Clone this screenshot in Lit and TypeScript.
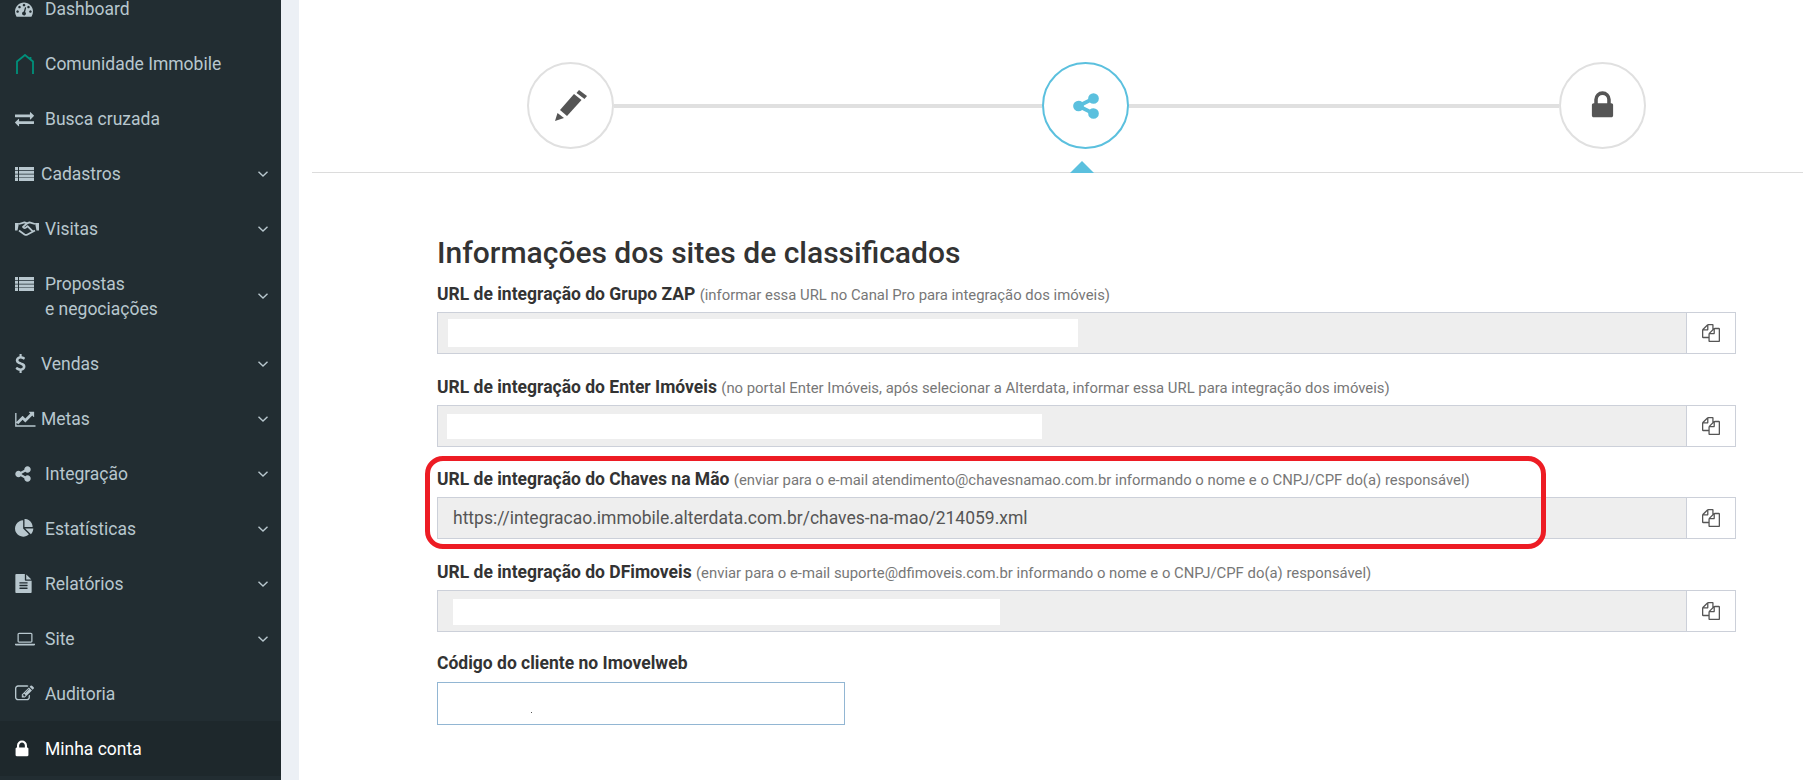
import { LitElement, html, css, svg } from "lit";
import { customElement } from "lit/decorators.js";

const P: Record<string, [string, string]> = {
  lock: ["0 0 1792 1792", "M640 768h512v-192q0-106-75-181t-181-75-181 75-75 181v192zm832 96v576q0 40-28 68t-68 28h-960q-40 0-68-28t-28-68v-576q0-40 28-68t68-28h32v-192q0-184 132-316t316-132 316 132 132 316v192h32q40 0 68 28t28 68z"],
  share: ["0 0 1792 1792", "M1344 1024q133 0 226.5 93.5t93.5 226.5-93.5 226.5-226.5 93.5-226.5-93.5-93.5-226.5q0-12 2-34l-360-180q-92 86-218 86-133 0-226.5-93.5t-93.5-226.5 93.5-226.5 226.5-93.5q126 0 218 86l360-180q-2-22-2-34 0-133 93.5-226.5t226.5-93.5 226.5 93.5 93.5 226.5-93.5 226.5-226.5 93.5q-126 0-218-86l-360 180q2 22 2 34t-2 34l360 180q92-86 218-86z"],
  files: ["0 0 1792 1792", "M1696 384q40 0 68 28t28 68v1216q0 40-28 68t-68 28h-960q-40 0-68-28t-28-68v-288h-544q-40 0-68-28t-28-68v-672q0-40 20-88t48-76l408-408q28-28 76-48t88-20h416q40 0 68 28t28 68v328q68-40 128-40h416zm-544 213l-299 299h299v-299zm-640-384l-299 299h299v-299zm196 647l316-316v-416h-384v416q0 40-28 68t-68 28h-416v640h512v-256q0-40 20-88t48-76zm956 804v-1152h-384v416q0 40-28 68t-68 28h-416v640h896z"],
  exchange: ["0 0 1792 1792", "M1792 1184v192q0 13-9.5 22.5t-22.5 9.5h-1376v192q0 13-9.5 22.5t-22.5 9.5q-12 0-24-10l-319-320q-9-9-9-22 0-14 9-23l320-320q9-9 23-9 13 0 22.5 9.5t9.5 22.5v192h1376q13 0 22.5 9.5t9.5 22.5zm0-544q0 14-9 23l-320 320q-9 9-23 9-13 0-22.5-9.5t-9.5-22.5v-192h-1376q-13 0-22.5-9.5t-9.5-22.5v-192q0-13 9.5-22.5t22.5-9.5h1376v-192q0-14 9-23t23-9q12 0 24 10l319 319q9 9 9 23z"],
  dash: ["0 0 1792 1792", "M384 1152q0-53-37.5-90.5t-90.5-37.5-90.5 37.5-37.5 90.5 37.5 90.5 90.5 37.5 90.5-37.5 37.5-90.5zm192-448q0-53-37.5-90.5t-90.5-37.5-90.5 37.5-37.5 90.5 37.5 90.5 90.5 37.5 90.5-37.5 37.5-90.5zm428 481l101-382q6-26-7.5-48.5t-38.5-29.5-48 6.5-30 39.5l-101 382q-60 5-107 43.5t-63 98.5q-20 77 20 146t117 89 146-20 89-117q16-60-6-117t-72-91zm660-33q0-53-37.5-90.5t-90.5-37.5-90.5 37.5-37.5 90.5 37.5 90.5 90.5 37.5 90.5-37.5 37.5-90.5zm-640-640q0-53-37.5-90.5t-90.5-37.5-90.5 37.5-37.5 90.5 37.5 90.5 90.5 37.5 90.5-37.5 37.5-90.5zm448 192q0-53-37.5-90.5t-90.5-37.5-90.5 37.5-37.5 90.5 37.5 90.5 90.5 37.5 90.5-37.5 37.5-90.5zm320 448q0 261-141 483-19 29-54 29h-1402q-35 0-54-29-141-221-141-483 0-182 71-348t191-286 286-191 348-71 348 71 286 191 191 286 71 348z"],
  pie: ["0 0 1792 1792", "M768 890l546 546q-106 108-247.5 168t-298.5 60q-209 0-385.5-103t-279.5-279.5-103-385.5 103-385.5 279.5-279.5 385.5-103v762zm187 2h773q0 157-60 298.5t-168 247.5zm709-128h-768v-768q209 0 385.5 103t279.5 279.5 103 385.5z"],
  file: ["0 0 1792 1792", "M1596 476q14 14 28 36h-472v-472q22 14 36 28zm-476 164h544v1056q0 40-28 68t-68 28h-1344q-40 0-68-28t-28-68v-1600q0-40 28-68t68-28h800v544q0 40 28 68t68 28zm160 736v-64q0-14-9-23t-23-9h-704q-14 0-23 9t-9 23v64q0 14 9 23t23 9h704q14 0 23-9t9-23zm0-256v-64q0-14-9-23t-23-9h-704q-14 0-23 9t-9 23v64q0 14 9 23t23 9h704q14 0 23-9t9-23zm0-256v-64q0-14-9-23t-23-9h-704q-14 0-23 9t-9 23v64q0 14 9 23t23 9h704q14 0 23-9t9-23z"],
  edit: ["0 0 1792 1792", "M888 1184l116-116-152-152-116 116v56h96v96h56zm440-720q-16-16-33 1l-350 350q-17 17-1 33t33-1l350-350q17-17 1-33zm80 594v190q0 119-84.5 203.5t-203.5 84.5h-832q-119 0-203.5-84.5t-84.5-203.5v-832q0-119 84.5-203.5t203.5-84.5h832q63 0 117 25 15 7 18 23 3 17-9 29l-49 49q-14 14-32 8-23-6-45-6h-832q-66 0-113 47t-47 113v832q0 66 47 113t113 47h832q66 0 113-47t47-113v-126q0-13 9-22l64-64q15-15 35-7t20 29zm-96-738l288 288-672 672h-288v-288zm444 132l-92 92-288-288 92-92q28-28 68-28t68 28l152 152q28 28 28 68t-28 68z"],
  chart: ["0 0 2048 1792", "M1920 1536v128h-1920v-1280h128v1152h1792zm-128-1248v435q0 21-19.5 29.5t-35.5-7.5l-121-121-633 633q-10 10-23 10t-23-10l-233-233-416 416-192-192 585-585q10-10 23-10t23 10l233 233 464-464-121-121q-16-16-7.5-35.5t29.5-19.5h435q14 0 23 9t9 23z"],
  usd: ["0 0 1792 1792", "M1362 1185q0 153-99.5 263.5t-258.5 136.5v175q0 14-9 23t-23 9h-135q-13 0-22.5-9.5t-9.5-22.5v-175q-66-9-127.5-31t-101.5-44.5-74-48-46.5-37.5-17.5-18q-17-21-2-41l103-135q7-10 23-12 15-2 24 9l2 2q113 99 243 125 37 8 74 8 81 0 142.5-43t61.5-122q0-28-15-53t-33.5-42-58.5-37.5-66-32-80-32.5q-39-16-61.5-25t-61.5-26.5-62.5-31-56.5-35.5-53.5-42.5-43.5-49-35.5-58-21-66.5-8.5-78q0-138 98-242t255-134v-180q0-13 9.5-22.5t22.5-9.5h135q14 0 23 9t9 23v176q57 6 110.5 23t87 33.5 63.5 37.5 39 29 15 14q17 18 5 38l-81 146q-8 15-23 16-14 3-27-7-3-3-14.5-12t-39-26.5-58.5-32-74.5-26-85.5-11.5q-95 0-155 43t-60 111q0 26 8.5 48t29.5 41.5 39.5 33 56 31 60.5 27 70 27.5q53 20 81 31.5t76 35 75.5 42.5 62 50 53 63.5 31.5 76.5 13 94z"],
  laptop: ["0 0 2048 1792", "M416 1280q-66 0-113-47t-47-113v-704q0-66 47-113t113-47h1216q66 0 113 47t47 113v704q0 66-47 113t-113 47h-1216zm-32-864v704q0 13 9.5 22.5t22.5 9.5h1216q13 0 22.5-9.5t9.5-22.5v-704q0-13-9.5-22.5t-22.5-9.5h-1216q-13 0-22.5 9.5t-9.5 22.5zm1504 960h160v96q0 40-47 68t-113 28h-1728q-66 0-113-28t-47-68v-96h1888z"],
  list: ["0 0 19 14", "M0 0h3v3H0zM4 0h15v3H4zM0 3.700h3v3H0zM4 3.700h15v3H4zM0 7.400h3v3H0zM4 7.400h15v3H4zM0 11h3v3H0zM4 11h15v3H4z"],
};

function icon(name: string, w: number, h: number, cls = "") {
  const [vb, d] = P[name];
  return html`<svg class=${cls} width=${w} height=${h} viewBox=${vb} fill="currentColor" aria-hidden="true"><path d=${d}></path></svg>`;
}

const handshake = html`<svg width="24" height="15" viewBox="0 0 24 14" fill="none" stroke="currentColor" stroke-width="1.800" stroke-linejoin="round" aria-hidden="true">
  <path d="M4 2.500L9.500.800l2.500 1 2.500-1L20 2.500"></path>
  <path d="M4 9l5.500 4c1 .6 2 .6 3 0L20 9"></path>
  <path d="M12 1.800L8 5.500c1 1.500 2.500 1.200 3.500.2l1-1 5.500 5.500"></path>
  <path d="M20 1.500h4V9h-2.500zM0 1.500h4L2.500 9H0z" fill="currentColor" stroke="none"></path>
</svg>`;

const house = html`<svg width="20" height="20" viewBox="0 0 20 20" fill="none" stroke="#00907b" stroke-width="1.800" aria-hidden="true">
  <path d="M2 20V7.500L10 1l5.500 4.500V3m0 2.500L18 7.500V20"></path>
</svg>`;

const pencil = svg`<svg width="32" height="31" viewBox="0 0 32 31" fill="#555" aria-hidden="true">
  <path d="M0 31l2.500-8 6.500 5z"></path>
  <path d="M5 20L19 4l7.500 6L12 26z"></path>
  <path d="M24 0l8 6-2.500 3-8-6z"></path>
</svg>`;

interface Item { label: string[]; icon: unknown; narrow?: boolean; sub?: boolean; active?: boolean; top?: boolean; shift?: string; }

const items: Item[] = [
  { label: ["Dashboard"], icon: icon("dash", 18, 18) },
  { label: ["Comunidade Immobile"], icon: house },
  { label: ["Busca cruzada"], icon: icon("exchange", 19, 19) },
  { label: ["Cadastros"], icon: icon("list", 19, 14), narrow: true, sub: true },
  { label: ["Visitas"], icon: handshake, sub: true },
  { label: ["Propostas", "e negociações"], icon: icon("list", 19, 14), sub: true, top: true },
  { label: ["Vendas"], icon: icon("usd", 19, 19), narrow: true, sub: true, shift: "shift-usd" },
  { label: ["Metas"], icon: icon("chart", 22, 19), narrow: true, sub: true },
  { label: ["Integração"], icon: icon("share", 18, 18), sub: true, shift: "shift-share" },
  { label: ["Estatísticas"], icon: icon("pie", 19, 19), sub: true },
  { label: ["Relatórios"], icon: icon("file", 19, 19), sub: true, shift: "shift-file" },
  { label: ["Site"], icon: icon("laptop", 20, 18), sub: true },
  { label: ["Auditoria"], icon: icon("edit", 19, 19) },
  { label: ["Minha conta"], icon: icon("lock", 20, 20), active: true, shift: "shift-lock" },
];

interface Mask { left: number; width: number; height: number; dy: number; }
interface Field { label: string; hint: string; value?: string; mask?: Mask; }

const fields: Field[] = [
  { label: "URL de integração do Grupo ZAP", hint: "(informar essa URL no Canal Pro para integração dos imóveis)", mask: { left: 10, width: 630, height: 28, dy: -1 } },
  { label: "URL de integração do Enter Imóveis", hint: "(no portal Enter Imóveis, após selecionar a Alterdata, informar essa URL para integração dos imóveis)", mask: { left: 9, width: 595, height: 25, dy: 2 } },
  { label: "URL de integração do Chaves na Mão", hint: "(enviar para o e-mail atendimento@chavesnamao.com.br informando o nome e o CNPJ/CPF do(a) responsável)", value: "https://integracao.immobile.alterdata.com.br/chaves-na-mao/214059.xml" },
  { label: "URL de integração do DFimoveis", hint: "(enviar para o e-mail suporte@dfimoveis.com.br informando o nome e o CNPJ/CPF do(a) responsável)", mask: { left: 15, width: 547, height: 26, dy: 2 } },
];

@customElement("app-root")
export class AppRoot extends LitElement {
  static styles = css`
    :host { display: flex; width: 1803px; height: 780px; overflow: hidden; background: #fff; font-family: Roboto, "Liberation Sans", sans-serif; position: relative; }
    .side { width: 281px; flex: none; background: #222d32; color: #b8c7ce; font-size: 17.5px; }
    .menu { margin-top: -19px; display: flex; flex-direction: column; }
    .row { height: 55px; display: flex; align-items: center; padding: 0 13px 0 15px; box-sizing: border-box; }
    .row.two { height: 80px; }
    .row.active { background: #1e282c; color: #fff; }
    .ic { width: 30px; flex: none; display: flex; align-items: center; }
    .ic.narrow { width: 26px; }
    .ic.top { margin-top: -25px; }
    .shift-usd svg { margin-left: -4px; }
    .shift-share svg { margin-left: -1px; }
    .shift-file svg { margin-left: -1px; }
    .shift-lock svg { margin-left: -3px; }
    .lbl { flex: 1; line-height: 25px; padding-top: 2px; }
    .lbl span { display: block; }
    .chev { flex: none; }
    .gutter { width: 18px; flex: none; background: #ecf0f5; }
    .main { flex: 1; min-width: 0; padding: 0 67px 0 13px; }
    .steps { height: 173px; margin-right: -67px; box-sizing: border-box; border-bottom: 1px solid #dcdcdc; position: relative; display: flex; padding: 62px 0 0 215px; }
    .circle { width: 87px; height: 87px; box-sizing: border-box; border-radius: 50%; border: 2px solid #e0e0e0; background: #fff; display: flex; align-items: center; justify-content: center; flex: none; color: #555; }
    .circle.on { border-color: #5bc0de; color: #5bc0de; }
    .line { height: 4px; background: #e0e0e0; flex: none; margin-top: 41.500px; }
    .l1 { width: 428px; }
    .l2 { width: 430px; }
    .arrow { position: absolute; left: 758px; bottom: -1px; width: 0; height: 0; border-left: 12.500px solid transparent; border-right: 12.500px solid transparent; border-bottom: 12px solid #5bc0de; }
    .form { padding: 0 0 0 125px; }
    h2 { margin: 0; padding-top: 62px; font-size: 30px; font-weight: 500; line-height: 36px; color: #333; }
    .field { margin-top: 10px; }
    .field + .field { margin-top: 19.670px; }
    .lab { display: block; line-height: 26px; font-size: 17.5px; font-weight: 700; color: #333; margin-bottom: 4px; white-space: nowrap; }
    .hint { font-size: 14.875px; font-weight: 400; color: #777; }
    .group { display: flex; height: 42px; }
    .input { flex: 1; background: #eee; border: 1px solid #ccd0d9; box-sizing: border-box; padding: 0 15px; font-size: 17.5px; color: #555; display: flex; align-items: center; }
    .input.masked { padding: 0; }
    .mask { background: #fff; }
    .btn { width: 49px; flex: none; border: 1px solid #ccd0d9; border-left: 0; box-sizing: border-box; display: flex; align-items: center; justify-content: center; color: #555; }
    .field.code { margin-top: 18px; }
    .code .lab { margin-bottom: 6px; }
    .code .box { width: 408px; height: 43px; border: 1px solid #92b6d3; box-sizing: border-box; position: relative; }
    .dot { position: absolute; left: 93px; top: 29px; width: 1px; height: 1px; background: #555; }
    .redmark { position: absolute; left: 425px; top: 456px; width: 1121px; height: 93px; box-sizing: border-box; border: 5px solid #ed1c24; border-radius: 18px; pointer-events: none; }
  `;

  render() {
    return html`
      <aside class="side"><nav class="menu">
        ${items.map((i) => html`
          <div class="row ${i.label.length > 1 ? "two" : ""} ${i.active ? "active" : ""}">
            <div class="ic ${i.narrow ? "narrow" : ""} ${i.top ? "top" : ""} ${i.shift ?? ""}">${i.icon}</div>
            <div class="lbl">${i.label.map((l) => html`<span>${l}</span>`)}</div>
            ${i.sub ? html`<svg class="chev" width="10" height="6" viewBox="0 0 10 6" fill="none" stroke="currentColor" stroke-width="1.400" aria-hidden="true"><path d="M.5.700L5 5 9.500.700"></path></svg>` : ""}
          </div>`)}
      </nav></aside>
      <div class="gutter"></div>
      <main class="main">
        <div class="steps">
          <div class="circle">${pencil}</div>
          <div class="line l1"></div>
          <div class="circle on">${icon("share", 30, 30)}</div>
          <div class="line l2"></div>
          <div class="circle">${icon("lock", 33, 33)}</div>
          <div class="arrow"></div>
        </div>
        <div class="form">
          <h2>Informações dos sites de classificados</h2>
          ${fields.map((f) => html`
            <div class="field">
              <label class="lab">${f.label} <span class="hint">${f.hint}</span></label>
              <div class="group">
                ${f.mask
                  ? html`<div class="input masked"><div class="mask" style="margin-left:${f.mask.left}px;width:${f.mask.width}px;height:${f.mask.height}px;margin-top:${f.mask.dy}px"></div></div>`
                  : html`<div class="input">${f.value}</div>`}
                <div class="btn">${icon("files", 18, 18)}</div>
              </div>
            </div>`)}
          <div class="field code">
            <label class="lab">Código do cliente no Imovelweb</label>
            <div class="box"><div class="dot"></div></div>
          </div>
        </div>
      </main>
      <div class="redmark"></div>
    `;
  }
}
